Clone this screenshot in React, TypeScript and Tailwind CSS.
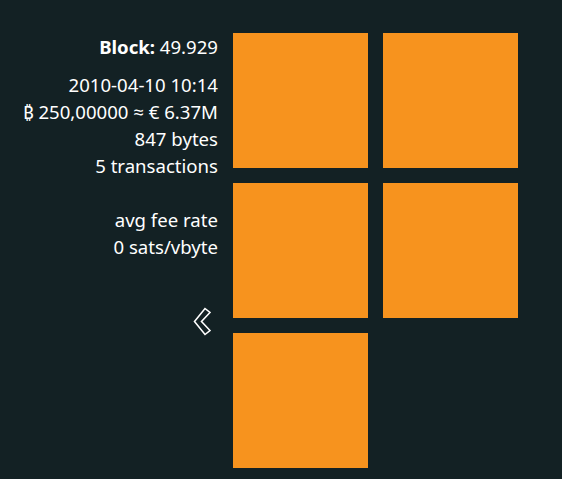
export default function App() {
  const blocks = [0, 1, 2, 3, 4];

  return (
    <div
      className="flex h-[479px] w-[562px] bg-[#132124] text-white"
      style={{ fontFamily: '"Noto Sans", "Open Sans", sans-serif' }}
    >
      <div className="flex w-[218px] flex-col items-end pt-[33px] text-right text-[18.6px] leading-[27px]">
        <div>
          <span className="font-bold">Block:</span> 49.929
        </div>
        <div className="mt-[11px]">2010-04-10 10:14</div>
        <div>₿ 250,00000 ≈ € 6.37M</div>
        <div>847 bytes</div>
        <div>5 transactions</div>
        <div className="mt-[27px]">avg fee rate</div>
        <div>0 sats/vbyte</div>
        <button className="mt-[47px] mr-[7px] flex">
          <svg width="18" height="29" viewBox="0 0 18 29" fill="none">
            <path
              d="M12 1.5 L17 5.5 L8.5 14.5 L17 23.5 L12 27.5 L1.5 14.5 Z"
              stroke="white"
              strokeWidth="1.6"
              strokeLinejoin="miter"
            />
          </svg>
        </button>
      </div>
      <div className="ml-[15px] grid grid-cols-[135px_135px] content-start gap-[15px] pt-[33px]">
        {blocks.map((b) => (
          <div key={b} className="h-[135px] w-[135px] bg-[#f7931e]" />
        ))}
      </div>
    </div>
  );
}
